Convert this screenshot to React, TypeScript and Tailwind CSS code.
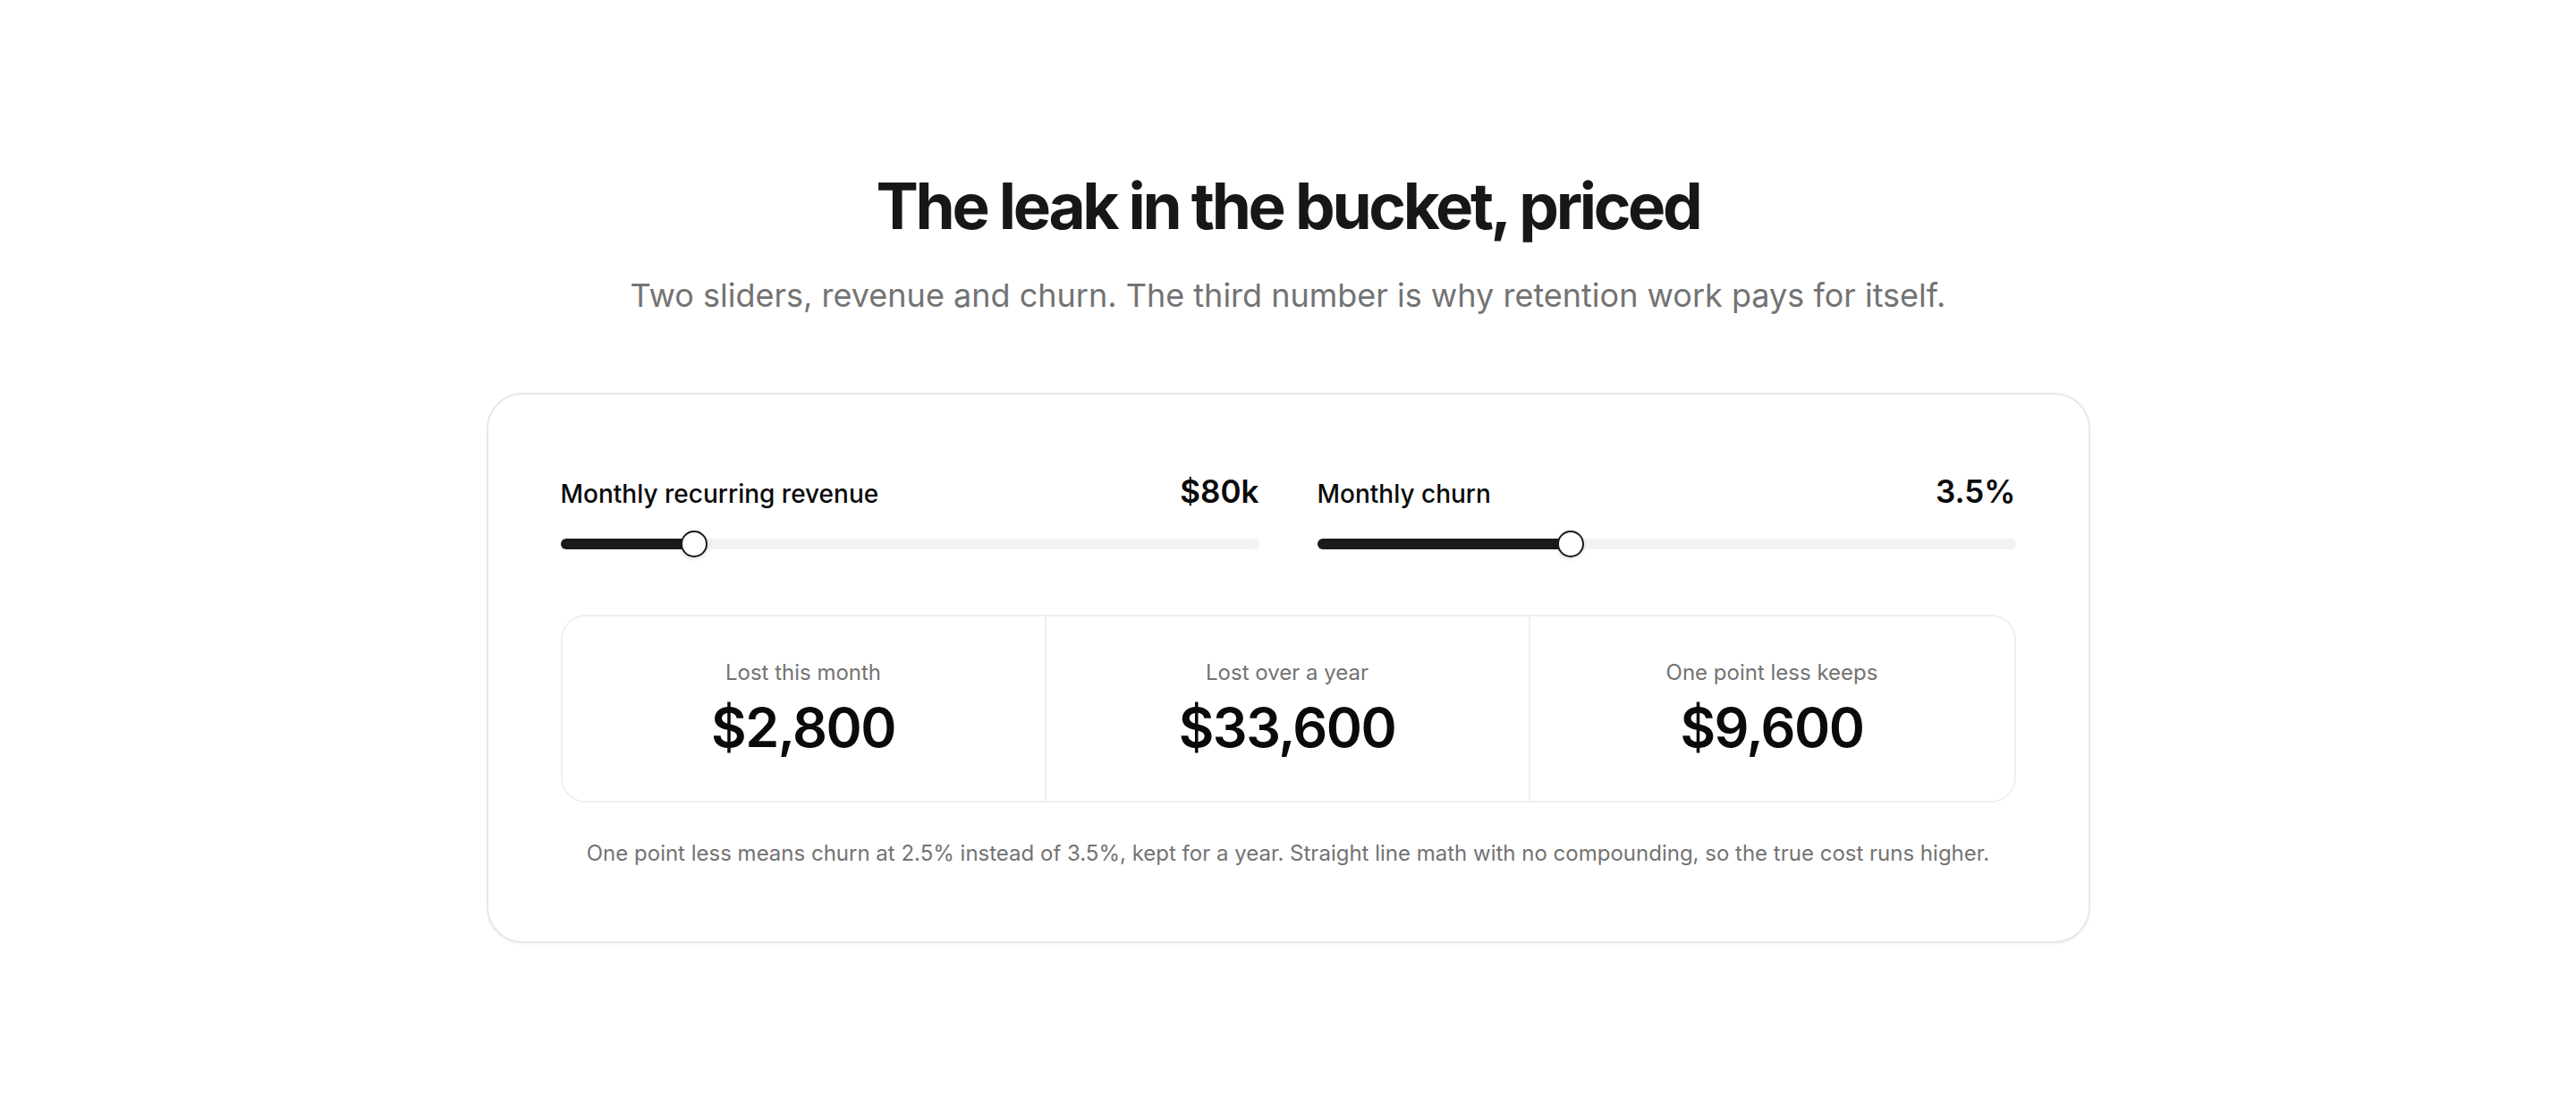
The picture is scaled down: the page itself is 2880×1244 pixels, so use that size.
import React from "react";

type SliderProps = {
  label: string;
  value: string;
  pct: number;
};

const Slider = ({ label, value, pct }: SliderProps) => {
  return (
    <div className="flex flex-col">
      <div className="flex items-baseline justify-between">
        <span className="text-[28px] font-medium leading-[40px] text-[#0a0a0a]">{label}</span>
        <span className="text-[35px] font-semibold leading-[49px] text-[#0a0a0a]">{value}</span>
      </div>
      <div className="relative mt-[19px] flex h-[30px] items-center">
        <div className="h-[12px] w-full rounded-full bg-[#f2f2f2]" />
        <div
          className="absolute left-0 top-[9px] h-[12px] rounded-full bg-[#1a1a1a]"
          style={{ width: `${pct}%` }}
        />
        <div
          className="absolute top-0 h-[30px] w-[30px] -translate-x-1/2 rounded-full border-[2.5px] border-[#1a1a1a] bg-white shadow-[0_2px_4px_rgba(0,0,0,0.12)]"
          style={{ left: `${pct}%` }}
        />
      </div>
    </div>
  );
};

const Metric = ({ label, value, last }: { label: string; value: string; last?: boolean }) => {
  return (
    <div className={`flex flex-col items-center pt-[47px] pb-[49px] ${last ? "" : "border-r-2 border-[#efefef]"}`}>
      <span className="text-[24px] leading-[32px] text-[#737373]">{label}</span>
      <span className="mt-[12px] text-[61px] font-semibold leading-[66px] tracking-[-0.025em] text-[#0a0a0a]">
        {value}
      </span>
    </div>
  );
};

const App = () => {
  return (
    <div className="min-h-[1244px] w-full bg-white pt-[190px]" style={{ fontFamily: "Inter, 'Noto Sans', sans-serif" }}>
      <h1 className="text-center text-[71px] font-bold leading-[80px] tracking-[-0.047em] text-[#171717]">
        The leak in the bucket, priced
      </h1>
      <p className="mt-[36px] text-center text-[36px] leading-[49px] text-[#737373]">
        Two sliders, revenue and churn. The third number is why retention work pays for itself.
      </p>

      <div className="mx-auto mt-[84px] w-[1793px] rounded-[40px] border-2 border-[#e8e8e8] bg-white px-[81px] pt-[84px] pb-[80px] shadow-[0_2px_3px_rgba(0,0,0,0.04)]">
        <div className="grid grid-cols-2 gap-[65px]">
          <Slider label="Monthly recurring revenue" value="$80k" pct={19.2} />
          <Slider label="Monthly churn" value="3.5%" pct={36.3} />
        </div>

        <div className="mt-[64px] grid grid-cols-3 rounded-[28px] border-2 border-[#efefef]">
          <Metric label="Lost this month" value="$2,800" />
          <Metric label="Lost over a year" value="$33,600" />
          <Metric label="One point less keeps" value="$9,600" last />
        </div>

        <p className="mt-[39px] text-center text-[24px] leading-[36px] text-[#737373]">
          One point less means churn at 2.5% instead of 3.5%, kept for a year. Straight line math with no compounding, so the true cost runs higher.
        </p>
      </div>
    </div>
  );
};

export default App;
